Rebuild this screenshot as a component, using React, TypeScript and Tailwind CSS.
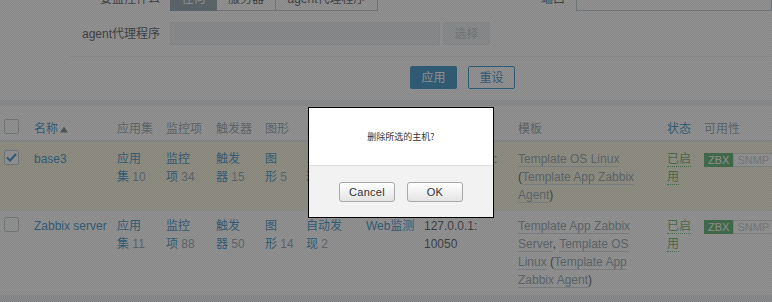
import type { ReactNode } from "react";

const cols =
  "grid grid-cols-[34px_83px_49px_50px_49px_41px_60px_58px_94px_149px_37px_1fr] items-start";

function Box({ checked = false }: { checked?: boolean }) {
  return (
    <span className="ml-[4px] flex h-[15px] w-[15px] items-center justify-center rounded-[2px] border border-[#acbbc2] bg-white">
      {checked && (
        <svg width="11" height="9" viewBox="0 0 11 9">
          <path d="M1 4.5 L4 7.5 L10 1" fill="none" stroke="#0275b8" strokeWidth="2" />
        </svg>
      )}
    </span>
  );
}

function Count({ top, bottom, n }: { top: string; bottom: string; n: number }) {
  return (
    <div>
      <span className="text-[#0275b8]">{top}</span>
      <br />
      <span className="text-[#0275b8]">{bottom}</span>{" "}
      <span className="text-[#768d99]">{n}</span>
    </div>
  );
}

function Tpl({ children }: { children: ReactNode }) {
  return <span className="border-b border-[#c5d0d6] text-[#768d99]">{children}</span>;
}

function Status() {
  return (
    <div className="text-[#429e47]">
      <span className="border-b border-dotted border-[#429e47]">已启</span>
      <br />
      <span className="border-b border-dotted border-[#429e47]">用</span>
    </div>
  );
}

function Avail() {
  return (
    <div className="flex pt-[3px] text-[11px] leading-[12px]">
      <span className="border border-[#2f9a4a] bg-[#2f9a4a] px-[3px] text-white">ZBX</span>
      <span className="border border-[#cfd7db] bg-white px-[3px] text-[#b4c1c7]">SNMP</span>
      <span className="border border-[#cfd7db] bg-white px-[3px] text-[#b4c1c7]">JMX</span>
    </div>
  );
}

export default function App() {
  return (
    <div className="relative h-[302px] w-[772px] overflow-hidden bg-[#ebeef0] font-['Liberation_Sans','Noto_Sans_CJK_SC',sans-serif] text-[12px] text-[#1f2c33]">
      {/* filter */}
      <div className="flex h-[100px] flex-col bg-white">
        <div className="-mt-[13px] flex h-[24px] items-center">
          <div className="w-[160px] text-right">要监控什么</div>
          <div className="ml-[10px] flex h-[24px]">
            <span className="flex w-[47px] items-center justify-center border border-[#768d99] bg-[#768d99] text-white">任何</span>
            <span className="flex w-[59px] items-center justify-center border border-l-0 border-[#acbbc2]">服务器</span>
            <span className="flex w-[102px] items-center justify-center border border-l-0 border-[#acbbc2]">agent代理程序</span>
          </div>
          <div className="w-[187px] text-right">端口</div>
          <div className="ml-[11px] h-[24px] flex-1 border border-[#acbbc2]" />
        </div>
        <div className="mt-[11px] flex h-[23px] items-center">
          <div className="w-[160px] text-right">agent代理程序</div>
          <div className="ml-[10px] h-[23px] w-[270px] border border-[#dfe4e7] bg-[#ebeef0]" />
          <div className="ml-[3px] flex h-[23px] w-[47px] items-center justify-center rounded-[2px] border border-[#dfe4e7] bg-[#ebeef0] text-[#acbbc2]">
            选择
          </div>
        </div>
        <div className="ml-[70px] mt-[11px] border-t border-[#ebeef0]" />
        <div className="mt-[9px] flex gap-[11px] pl-[410px]">
          <div className="flex h-[23px] w-[47px] items-center justify-center rounded-[2px] bg-[#0275b8] text-white">应用</div>
          <div className="flex h-[23px] w-[47px] items-center justify-center rounded-[2px] border border-[#0275b8] bg-white text-[#0275b8]">重设</div>
        </div>
      </div>

      {/* hosts table */}
      <div className="mt-[6px] bg-white leading-[18px]">
        <div className="grid h-[36px] grid-cols-[34px_83px_49px_50px_49px_41px_60px_58px_94px_149px_37px_1fr] items-end border-b-2 border-[#dfe4e7] pb-[2px] text-[#768d99]">
          <div className="mb-[4px]">
            <Box />
          </div>
          <div className="flex items-center gap-[2px] text-[#0275b8]">
            名称
            <svg width="8" height="7" viewBox="0 0 8 7">
              <path d="M0 6.5 L4 0.5 L8 6.5 Z" fill="#53646e" />
            </svg>
          </div>
          <div>应用集</div>
          <div>监控项</div>
          <div>触发器</div>
          <div>图形</div>
          <div>自动发现</div>
          <div>Web监测</div>
          <div>接口</div>
          <div>模板</div>
          <div className="text-[#0275b8]">状态</div>
          <div>可用性</div>
        </div>

        <div className={`${cols} h-[69px] border-b border-[#ebeef0] bg-[#f9f5d9] pt-[8px]`}>
          <div>
            <Box checked />
          </div>
          <div className="text-[#0275b8]">base3</div>
          <Count top="应用" bottom="集" n={10} />
          <Count top="监控" bottom="项" n={34} />
          <Count top="触发" bottom="器" n={15} />
          <Count top="图" bottom="形" n={5} />
          <Count top="自动发" bottom="现" n={1} />
          <div className="text-[#0275b8]">Web监测</div>
          <div>
            192.168.1.13:
            <br />
            10050
          </div>
          <div>
            <Tpl>Template OS Linux</Tpl>
            <br />
            (<Tpl>
              Template App Zabbix
              <br />
              Agent
            </Tpl>
            )
          </div>
          <Status />
          <Avail />
        </div>

        <div className={`${cols} h-[85px] border-b border-[#ebeef0] pt-[6px]`}>
          <div>
            <Box />
          </div>
          <div className="text-[#0275b8]">Zabbix server</div>
          <Count top="应用" bottom="集" n={11} />
          <Count top="监控" bottom="项" n={88} />
          <Count top="触发" bottom="器" n={50} />
          <Count top="图" bottom="形" n={14} />
          <Count top="自动发" bottom="现" n={2} />
          <div className="text-[#0275b8]">Web监测</div>
          <div>
            127.0.0.1:
            <br />
            10050
          </div>
          <div>
            <Tpl>
              Template App Zabbix
              <br />
              Server
            </Tpl>
            , <Tpl>
              Template OS
              <br />
              Linux
            </Tpl>{" "}
            (<Tpl>
              Template App
              <br />
              Zabbix Agent
            </Tpl>
            )
          </div>
          <Status />
          <Avail />
        </div>
      </div>

      {/* modal overlay, dotted */}
      <div className="absolute inset-0 bg-[image:repeating-conic-gradient(rgba(74,74,74,0.66)_0_25%,rgba(74,74,74,0.6)_0_50%)] bg-[length:2px_2px]" />

      <div className="absolute left-[308px] top-[107px] flex h-[111px] w-[186px] flex-col border border-black bg-white">
        <div className="flex h-[57px] items-center justify-center font-['Noto_Sans_CJK_SC',sans-serif] text-[9px] text-[#333]">
          删除所选的主机?
        </div>
        <div className="flex flex-1 items-center justify-center gap-[12px] border-t border-[#dcdcdc] bg-[#f2f2f2] pt-[1px]">
          <button className="h-[20px] w-[56px] rounded-[3px] border border-[#a8a8a8] bg-gradient-to-b from-white to-[#e4e4e4] text-[11px] tracking-[0.3px] text-[#333]">
            Cancel
          </button>
          <button className="h-[20px] w-[56px] rounded-[3px] border border-[#a8a8a8] bg-gradient-to-b from-white to-[#e4e4e4] text-[11px] tracking-[0.3px] text-[#333]">
            OK
          </button>
        </div>
      </div>
    </div>
  );
}
